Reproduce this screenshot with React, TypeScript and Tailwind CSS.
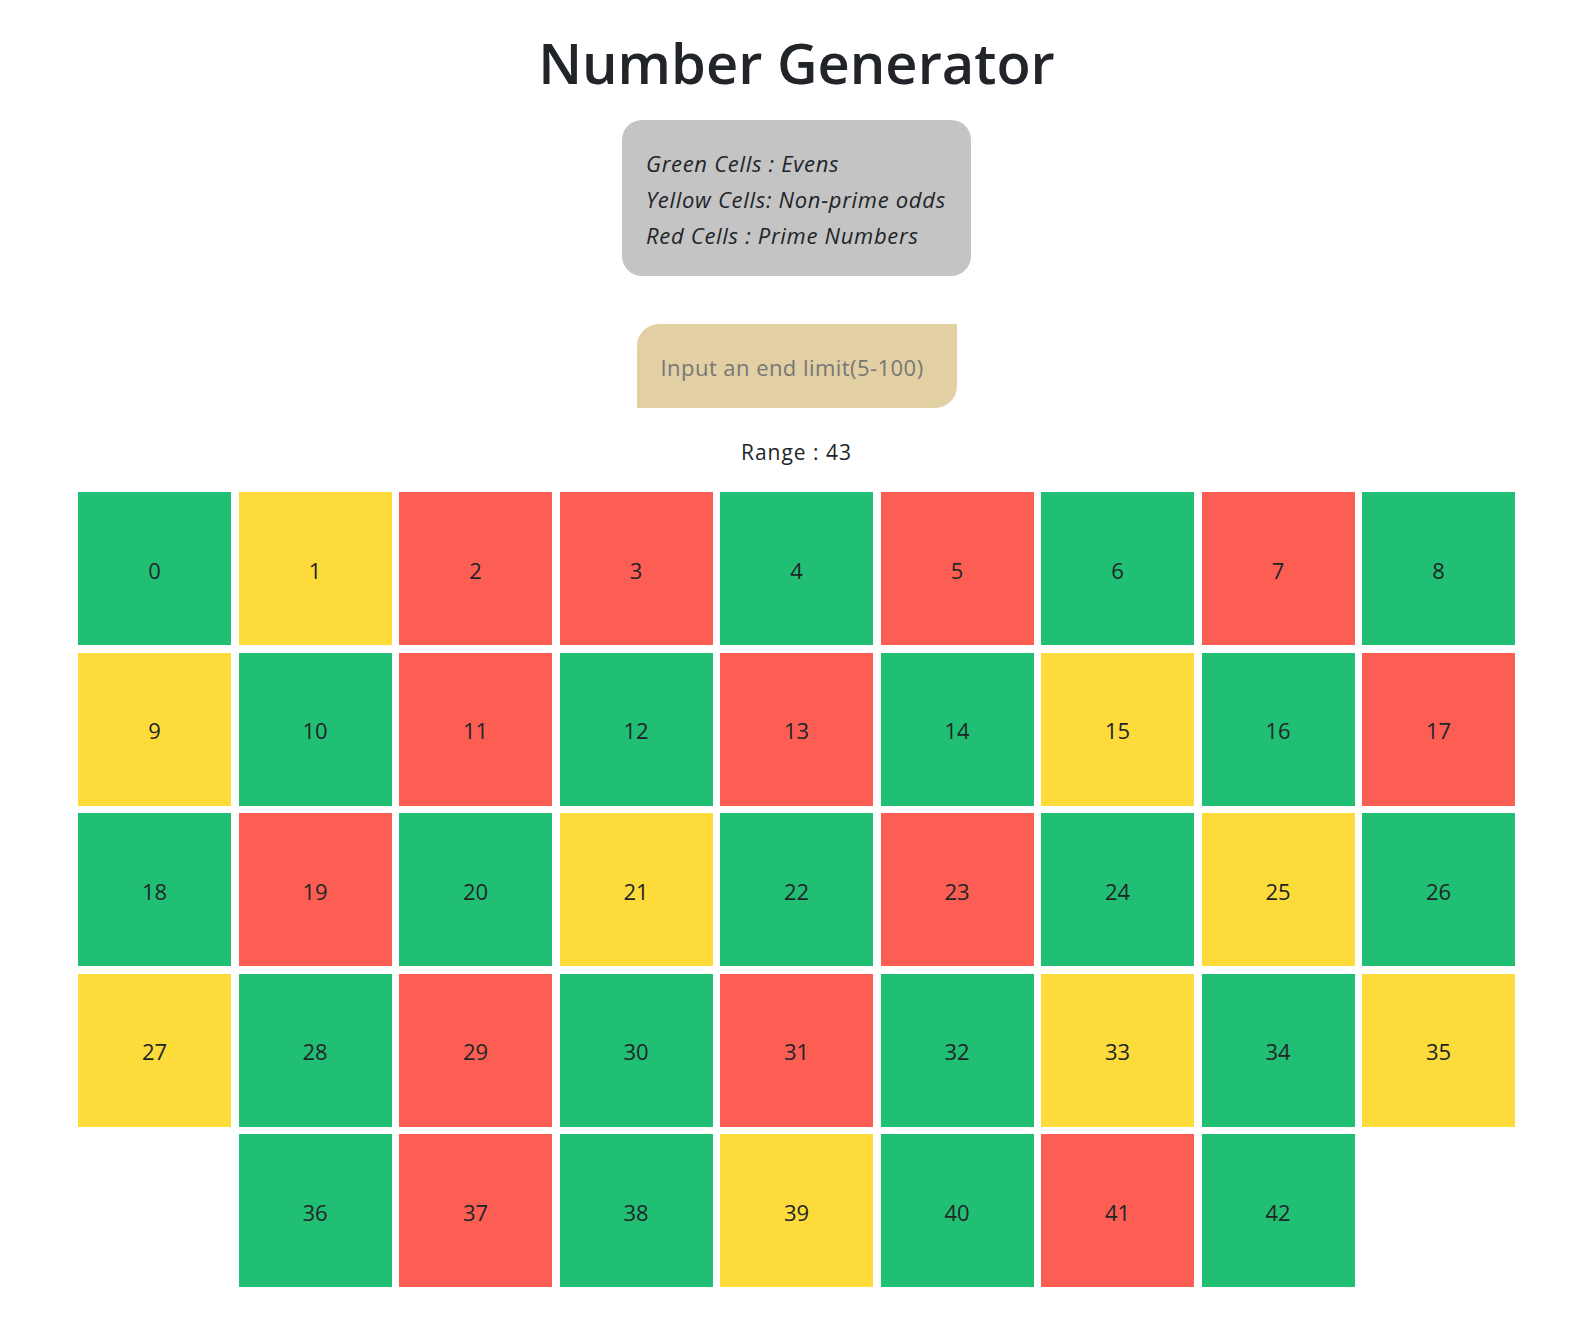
import React from "react";

const isPrime = (n: number) => {
  if (n < 2) return false;
  for (let i = 2; i * i <= n; i++) if (n % i === 0) return false;
  return true;
};

export default function App() {
  const nums = Array.from({ length: 43 }, (_, i) => i);
  return (
    <div
      className="min-h-[1335px] bg-white pl-[12px] flex flex-col items-center text-[#212529]"
      style={{ fontFamily: '"Open Sans", "Noto Sans", sans-serif' }}
    >
      <h1 className="mt-[26px] text-[56px] leading-[72px] font-semibold">Number Generator</h1>
      <div className="mt-[22px] w-[349px] h-[156px] rounded-[20px] bg-[#c4c4c4] pl-[24px] pt-[25px] italic text-[22px] leading-[36px] tracking-[0.7px]">
        <p>Green Cells : Evens</p>
        <p>Yellow Cells: Non-prime odds</p>
        <p>Red Cells : Prime Numbers</p>
      </div>
      <input
        placeholder="Input an end limit(5-100)"
        className="mt-[48px] w-[320px] h-[84px] bg-[#e2cfa3] rounded-tl-[22px] rounded-br-[22px] pl-[24px] pt-[2px] text-[22px] placeholder:text-[#777777] outline-none tracking-[0.45px]"
      />
      <p className="mt-[29px] mb-[1px] text-[21px] leading-[30px] tracking-[1px]">Range : 43</p>
      <div className="mt-[24px] w-[1437px] flex flex-wrap justify-center gap-[7.5px]">
        {nums.map((n) => {
          const bg = isPrime(n) ? "bg-[#fd5e53]" : n % 2 === 0 ? "bg-[#21bf73]" : "bg-[#fddb3a]";
          return (
            <div
              key={n}
              className={`${bg} w-[153px] h-[153px] flex items-center justify-center pt-[3px] text-[22px]`}
            >
              {n}
            </div>
          );
        })}
      </div>
    </div>
  );
}
